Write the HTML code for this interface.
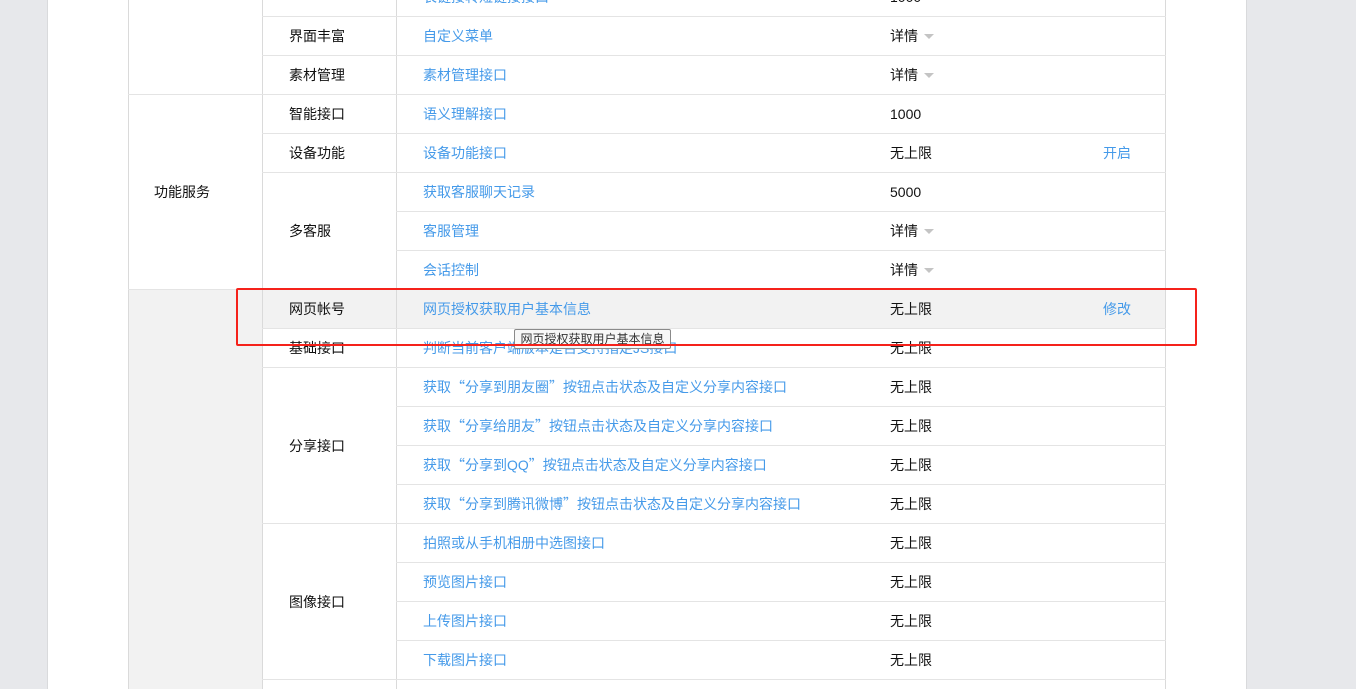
<!DOCTYPE html><html><head><meta charset="utf-8"><style>
body{margin:0;width:1356px;height:689px;overflow:hidden;background:#e7e8eb;font-family:"Liberation Sans","Noto Sans CJK SC",sans-serif;font-size:14px;color:#111;position:relative}
.panel{position:absolute;left:47px;top:0;width:1198px;height:689px;background:#fff;border-left:1px solid #d9dadc;border-right:1px solid #d9dadc}
.a{position:absolute}
.h{position:absolute;height:1px;background:#e4e4e4}
.v{position:absolute;width:1px;background:#dadada}
.t{position:absolute;line-height:40px;height:39px;white-space:nowrap}
.l{color:#459ae9}
.q{font-family:"Noto Sans CJK SC",sans-serif}
.arr{display:inline-block;width:0;height:0;border-left:5px solid transparent;border-right:5px solid transparent;border-top:5px solid #c4c4c4;margin-left:6px;vertical-align:2px}
</style></head><body>
<div class="panel"></div>
<div class="a" style="left:129px;top:289px;width:133px;height:400px;background:#f2f2f2"></div>
<div class="a" style="left:263px;top:289px;width:902px;height:39px;background:#f2f2f2"></div>
<div class="v" style="left:128px;top:0;height:689px"></div>
<div class="v" style="left:262px;top:0;height:689px"></div>
<div class="v" style="left:396px;top:0;height:689px"></div>
<div class="v" style="left:1165px;top:0;height:689px"></div>
<div class="h" style="left:262px;top:16px;width:904px"></div>
<div class="h" style="left:262px;top:55px;width:904px"></div>
<div class="h" style="left:128px;top:94px;width:1038px"></div>
<div class="h" style="left:262px;top:133px;width:904px"></div>
<div class="h" style="left:262px;top:172px;width:904px"></div>
<div class="h" style="left:396px;top:211px;width:770px"></div>
<div class="h" style="left:396px;top:250px;width:770px"></div>
<div class="h" style="left:128px;top:289px;width:1038px"></div>
<div class="h" style="left:262px;top:328px;width:904px"></div>
<div class="h" style="left:262px;top:367px;width:904px"></div>
<div class="h" style="left:396px;top:406px;width:770px"></div>
<div class="h" style="left:396px;top:445px;width:770px"></div>
<div class="h" style="left:396px;top:484px;width:770px"></div>
<div class="h" style="left:262px;top:523px;width:904px"></div>
<div class="h" style="left:396px;top:562px;width:770px"></div>
<div class="h" style="left:396px;top:601px;width:770px"></div>
<div class="h" style="left:396px;top:640px;width:770px"></div>
<div class="h" style="left:262px;top:679px;width:904px"></div>
<div class="t" style="left:154px;top:172px">功能服务</div>
<div class="t" style="left:289px;top:16px">界面丰富</div>
<div class="t" style="left:289px;top:55px">素材管理</div>
<div class="t" style="left:289px;top:94px">智能接口</div>
<div class="t" style="left:289px;top:133px">设备功能</div>
<div class="t" style="left:289px;top:211px">多客服</div>
<div class="t" style="left:289px;top:289px">网页帐号</div>
<div class="t" style="left:289px;top:328px">基础接口</div>
<div class="t" style="left:289px;top:426px">分享接口</div>
<div class="t" style="left:289px;top:582px">图像接口</div>
<div class="t l" style="left:423px;top:-23px">长链接转短链接接口</div>
<div class="t l" style="left:423px;top:16px">自定义菜单</div>
<div class="t l" style="left:423px;top:55px">素材管理接口</div>
<div class="t l" style="left:423px;top:94px">语义理解接口</div>
<div class="t l" style="left:423px;top:133px">设备功能接口</div>
<div class="t l" style="left:423px;top:172px">获取客服聊天记录</div>
<div class="t l" style="left:423px;top:211px">客服管理</div>
<div class="t l" style="left:423px;top:250px">会话控制</div>
<div class="t l" style="left:423px;top:289px">网页授权获取用户基本信息</div>
<div class="t l" style="left:423px;top:328px">判断当前客户端版本是否支持指定JS接口</div>
<div class="t l" style="left:423px;top:367px">获取<span class="q">“</span>分享到朋友圈<span class="q">”</span>按钮点击状态及自定义分享内容接口</div>
<div class="t l" style="left:423px;top:406px">获取<span class="q">“</span>分享给朋友<span class="q">”</span>按钮点击状态及自定义分享内容接口</div>
<div class="t l" style="left:423px;top:445px">获取<span class="q">“</span>分享到QQ<span class="q">”</span>按钮点击状态及自定义分享内容接口</div>
<div class="t l" style="left:423px;top:484px">获取<span class="q">“</span>分享到腾讯微博<span class="q">”</span>按钮点击状态及自定义分享内容接口</div>
<div class="t l" style="left:423px;top:523px">拍照或从手机相册中选图接口</div>
<div class="t l" style="left:423px;top:562px">预览图片接口</div>
<div class="t l" style="left:423px;top:601px">上传图片接口</div>
<div class="t l" style="left:423px;top:640px">下载图片接口</div>
<div class="t" style="left:890px;top:-23px">1000</div>
<div class="t" style="left:890px;top:16px">详情<span class="arr"></span></div>
<div class="t" style="left:890px;top:55px">详情<span class="arr"></span></div>
<div class="t" style="left:890px;top:94px">1000</div>
<div class="t" style="left:890px;top:133px">无上限</div>
<div class="t" style="left:890px;top:172px">5000</div>
<div class="t" style="left:890px;top:211px">详情<span class="arr"></span></div>
<div class="t" style="left:890px;top:250px">详情<span class="arr"></span></div>
<div class="t" style="left:890px;top:289px">无上限</div>
<div class="t" style="left:890px;top:328px">无上限</div>
<div class="t" style="left:890px;top:367px">无上限</div>
<div class="t" style="left:890px;top:406px">无上限</div>
<div class="t" style="left:890px;top:445px">无上限</div>
<div class="t" style="left:890px;top:484px">无上限</div>
<div class="t" style="left:890px;top:523px">无上限</div>
<div class="t" style="left:890px;top:562px">无上限</div>
<div class="t" style="left:890px;top:601px">无上限</div>
<div class="t" style="left:890px;top:640px">无上限</div>
<div class="t l" style="left:1103px;top:133px">开启</div>
<div class="t l" style="left:1103px;top:289px">修改</div>
<div class="a" style="left:514px;top:329px;width:155px;height:18px;background:#f7f7f7;border:1px solid #8a8a8a;border-radius:2px;font-size:12px;line-height:18px;color:#333;text-align:center">网页授权获取用户基本信息</div>
<div class="a" style="left:236px;top:288px;width:957px;height:54px;border:2.5px solid #f5221b;border-radius:2px"></div>
</body></html>
